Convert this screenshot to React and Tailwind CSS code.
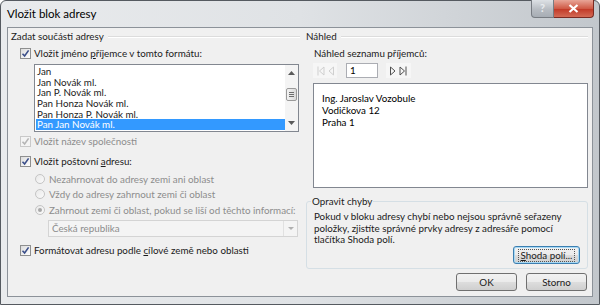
import React from 'react'

const CheckBox = ({ disabled }) => (
    <span className={`relative inline-flex h-[11px] w-[11px] shrink-0 items-center justify-center border ${disabled ? 'border-[#c9c9c9] bg-[#f4f4f4]' : 'border-[#8e8f8f] bg-gradient-to-br from-[#dcdcdc] to-[#ffffff]'}`}>
        <svg width="9" height="9" viewBox="0 0 9 9">
            <path d="M1.5 4.8 L3.6 7 L7.6 1.4" fill="none" stroke={disabled ? '#b5b5b5' : '#3b4f8a'} strokeWidth="1.6" />
        </svg>
    </span>
)

const Radio = ({ checked }) => (
    <span className="relative inline-flex h-[10px] w-[10px] shrink-0 items-center justify-center rounded-full border border-[#c4c4c4] bg-gradient-to-br from-[#e8e8e8] to-[#fbfbfb]">
        {checked && <span className="h-[4px] w-[4px] rounded-full bg-[#a8a8a8]" />}
    </span>
)

const Btn = ({ children, focused, className }) => (
    <div className={`flex items-center justify-center rounded-[3px] border ${focused ? 'border-[#3c7fb1] shadow-[inset_0_0_0_1px_#a7d9f5]' : 'border-[#707070]'} bg-[linear-gradient(#f2f2f2_0%,#ebebeb_48%,#dddddd_52%,#cfcfcf_100%)] ${className}`}>
        {focused ? (
            <span className="border border-dotted border-[#555] px-[2px] leading-[11px]">{children}</span>
        ) : (
            children
        )}
    </div>
)

const GroupHeader = ({ text }) => (
    <div className="flex h-[16px] items-center">
        <span className="text-[#222]">{text}</span>
        <span className="ml-[4px] h-px flex-1 bg-[#dcdcdc] shadow-[0_1px_0_#ffffff]" />
    </div>
)

const listItems = ['Jan', 'Jan Novák ml.', 'Jan P. Novák ml.', 'Pan Honza Novák ml.', 'Pan Honza P. Novák ml.', 'Pan Jan Novák ml.']

export default function App()
{
    return (
        <div className="h-[305px] w-[600px] overflow-hidden bg-white font-['Lato',sans-serif] text-[9.8px] text-[#1b1b1b]">
            <div className="flex h-full w-full flex-col rounded-t-[6px] border border-[#555a60] bg-[linear-gradient(90deg,#e9ebed_0%,#dfe2e5_50%,#c2c7cc_100%)]">
                {/* Title bar */}
                <div className="relative flex h-[26px] items-center pl-[6px]">
                    <span className="text-[11.5px] text-black">Vložit blok adresy</span>
                    <div className="absolute right-[5px] top-[-1px] flex">
                        <div className="flex h-[18px] w-[23px] items-center justify-center rounded-bl-[4px] border border-[#777c82] border-t-0 bg-[linear-gradient(#dde1e5,#b7bcc2_55%,#a7adb4)] text-[11px] font-bold text-[#e9ecef]">?</div>
                        <div className="flex h-[18px] w-[40px] items-center justify-center rounded-br-[4px] border border-l-0 border-t-0 border-[#7a2a22] bg-[linear-gradient(#e8a597,#cf5a46_50%,#c23b29_55%,#d36a55)]">
                            <svg width="11" height="9" viewBox="0 0 11 9">
                                <path d="M1.5 1 L9.5 8 M9.5 1 L1.5 8" stroke="#ffffff" strokeWidth="2.2" />
                            </svg>
                        </div>
                    </div>
                </div>

                {/* Client */}
                <div className="mx-[6px] mb-[7px] flex flex-1 border border-[#8c9299] bg-[#f0f0f0]">
                    {/* Left column */}
                    <div className="flex w-[292px] flex-col pl-[3px]">
                        <GroupHeader text="Zadat součásti adresy" />
                        <div className="mt-[2px] flex h-[14px] items-center pl-[9px]">
                            <CheckBox />
                            <span className="ml-[3px]">Vložit jméno <span className="underline">p</span>říjemce v tomto formátu:</span>
                        </div>
                        <div className="ml-[23px] mt-[4px] flex h-[68px] w-[265px] border border-[#828790] bg-white">
                            <div className="flex flex-1 flex-col pl-[1px] pt-[1px]">
                                {listItems.map((item, i) => (
                                    <div key={i} className={`h-[10.7px] pl-[1px] leading-[10.7px] ${i === 5 ? 'bg-[#3399ff] text-white' : ''}`}>{item}</div>
                                ))}
                            </div>
                            <div className="relative w-[13px] bg-[#f4f4f4]">
                                <svg className="absolute left-[3px] top-[6px]" width="7" height="4" viewBox="0 0 7 4"><path d="M0 4 L3.5 0 L7 4 Z" fill="#5a5a5a" /></svg>
                                <div className="absolute left-[1px] top-[23px] flex h-[13px] w-[11px] flex-col items-center justify-center gap-[1px] rounded-[2px] border border-[#9a9a9a] bg-[linear-gradient(90deg,#f3f3f3,#dadada)]">
                                    <span className="h-px w-[5px] bg-[#6d6d6d]" />
                                    <span className="h-px w-[5px] bg-[#6d6d6d]" />
                                    <span className="h-px w-[5px] bg-[#6d6d6d]" />
                                </div>
                                <svg className="absolute bottom-[6px] left-[3px]" width="7" height="4" viewBox="0 0 7 4"><path d="M0 0 L3.5 4 L7 0 Z" fill="#5a5a5a" /></svg>
                            </div>
                        </div>
                        <div className="mt-[2px] flex h-[14px] items-center pl-[9px]">
                            <CheckBox disabled />
                            <span className="ml-[3px] text-[#8d8d8d]">Vložit název společnosti</span>
                        </div>
                        <div className="mt-[6px] flex h-[14px] items-center pl-[9px]">
                            <CheckBox />
                            <span className="ml-[3px]">Vložit poštovní <span className="underline">a</span>dresu:</span>
                        </div>
                        <div className="mt-[4px] flex h-[14px] items-center pl-[24px] text-[#8d8d8d]">
                            <Radio />
                            <span className="ml-[4px]">Nezahrnovat do adresy zemi ani oblast</span>
                        </div>
                        <div className="mt-[1px] flex h-[14px] items-center pl-[24px] text-[#8d8d8d]">
                            <Radio />
                            <span className="ml-[4px]">Vždy do adresy zahrnout zemi či oblast</span>
                        </div>
                        <div className="mt-[2px] flex h-[14px] items-center pl-[24px] text-[#8d8d8d]">
                            <Radio checked />
                            <span className="ml-[4px] whitespace-nowrap">Zahrnout zemi či oblast, pokud se liší od těchto informací:</span>
                        </div>
                        <div className="ml-[37px] mt-[3px] flex h-[17px] w-[250px] items-center border border-[#d4d4d4] bg-[#f4f4f4] text-[#8d8d8d]">
                            <span className="flex-1 pl-[3px]">Česká republika</span>
                            <div className="flex h-full w-[14px] items-center justify-center border-l border-[#e1e1e1]">
                                <svg width="6" height="3" viewBox="0 0 6 3"><path d="M0 0 L3 3 L6 0 Z" fill="#b0b0b0" /></svg>
                            </div>
                        </div>
                        <div className="mt-[6px] flex h-[14px] items-center pl-[9px]">
                            <CheckBox />
                            <span className="ml-[3px]">Formátovat adresu podle <span className="underline">c</span>ílové země nebo oblasti</span>
                        </div>
                    </div>

                    {/* Right column */}
                    <div className="ml-[6px] flex w-[282px] flex-col">
                        <GroupHeader text="Náhled" />
                        <div className="mt-[2px] flex h-[14px] items-center pl-[8px]">
                            Náhled seznamu příjemců:
                        </div>
                        <div className="mt-[3px] flex h-[15px] items-center pl-[7px]">
                            <div className="flex h-full w-[24px] items-center justify-center gap-[3px] bg-[#f6f6f6]">
                                <svg width="8" height="10" viewBox="0 0 8 10"><path d="M1 0.5 V9.5 M7 1 L2.5 5 L7 9 Z" fill="none" stroke="#cfcfcf" strokeWidth="1" /></svg>
                                <svg width="6" height="10" viewBox="0 0 6 10"><path d="M5.5 1 L1 5 L5.5 9 Z" fill="none" stroke="#cfcfcf" strokeWidth="1" /></svg>
                            </div>
                            <div className="ml-[9px] flex h-full w-[32px] items-center border border-[#abadb3] bg-white pl-[3px] text-black">1</div>
                            <div className="ml-[8px] flex h-full w-[25px] items-center justify-center gap-[3px] bg-[#f6f6f6]">
                                <svg width="6" height="10" viewBox="0 0 6 10"><path d="M0.5 1 L5 5 L0.5 9 Z" fill="none" stroke="#505050" strokeWidth="1" /></svg>
                                <svg width="8" height="10" viewBox="0 0 8 10"><path d="M1 1 L5.5 5 L1 9 Z M7 0.5 V9.5" fill="none" stroke="#505050" strokeWidth="1" /></svg>
                            </div>
                        </div>
                        <div className="ml-[7px] mt-[5px] flex h-[105px] flex-col border border-[#828790] bg-white pl-[8px] pt-[8px] leading-[12px] text-black">
                            <span>Ing. Jaroslav Vozobule</span>
                            <span>Vodičkova 12</span>
                            <span>Praha 1</span>
                        </div>
                        <div className="relative mt-[13px] flex h-[68px] flex-col rounded-[3px] border border-[#d5dfe5] pl-[7px] pr-[7px]">
                            <span className="absolute left-[4px] top-[-7px] bg-[#f0f0f0] px-[1px] leading-[12px] text-[#222]">Opravit chyby</span>
                            <div className="mt-[9px] leading-[11.5px]">
                                Pokud v bloku adresy chybí nebo nejsou správně seřazeny<br />
                                položky, zjistíte správné prvky adresy z adresáře pomocí<br />
                                tlačítka Shoda polí.
                            </div>
                            <div className="mt-auto mb-[4px] flex justify-end">
                                <Btn focused className="h-[18px] w-[67px]"><span className="underline">S</span>hoda polí...</Btn>
                            </div>
                        </div>
                        <div className="mt-[4px] flex justify-end gap-[9px] pr-[1px]">
                            <Btn className="h-[18px] w-[61px]">OK</Btn>
                            <Btn className="h-[18px] w-[61px]">Storno</Btn>
                        </div>
                    </div>
                </div>
            </div>
        </div>
    )
}
